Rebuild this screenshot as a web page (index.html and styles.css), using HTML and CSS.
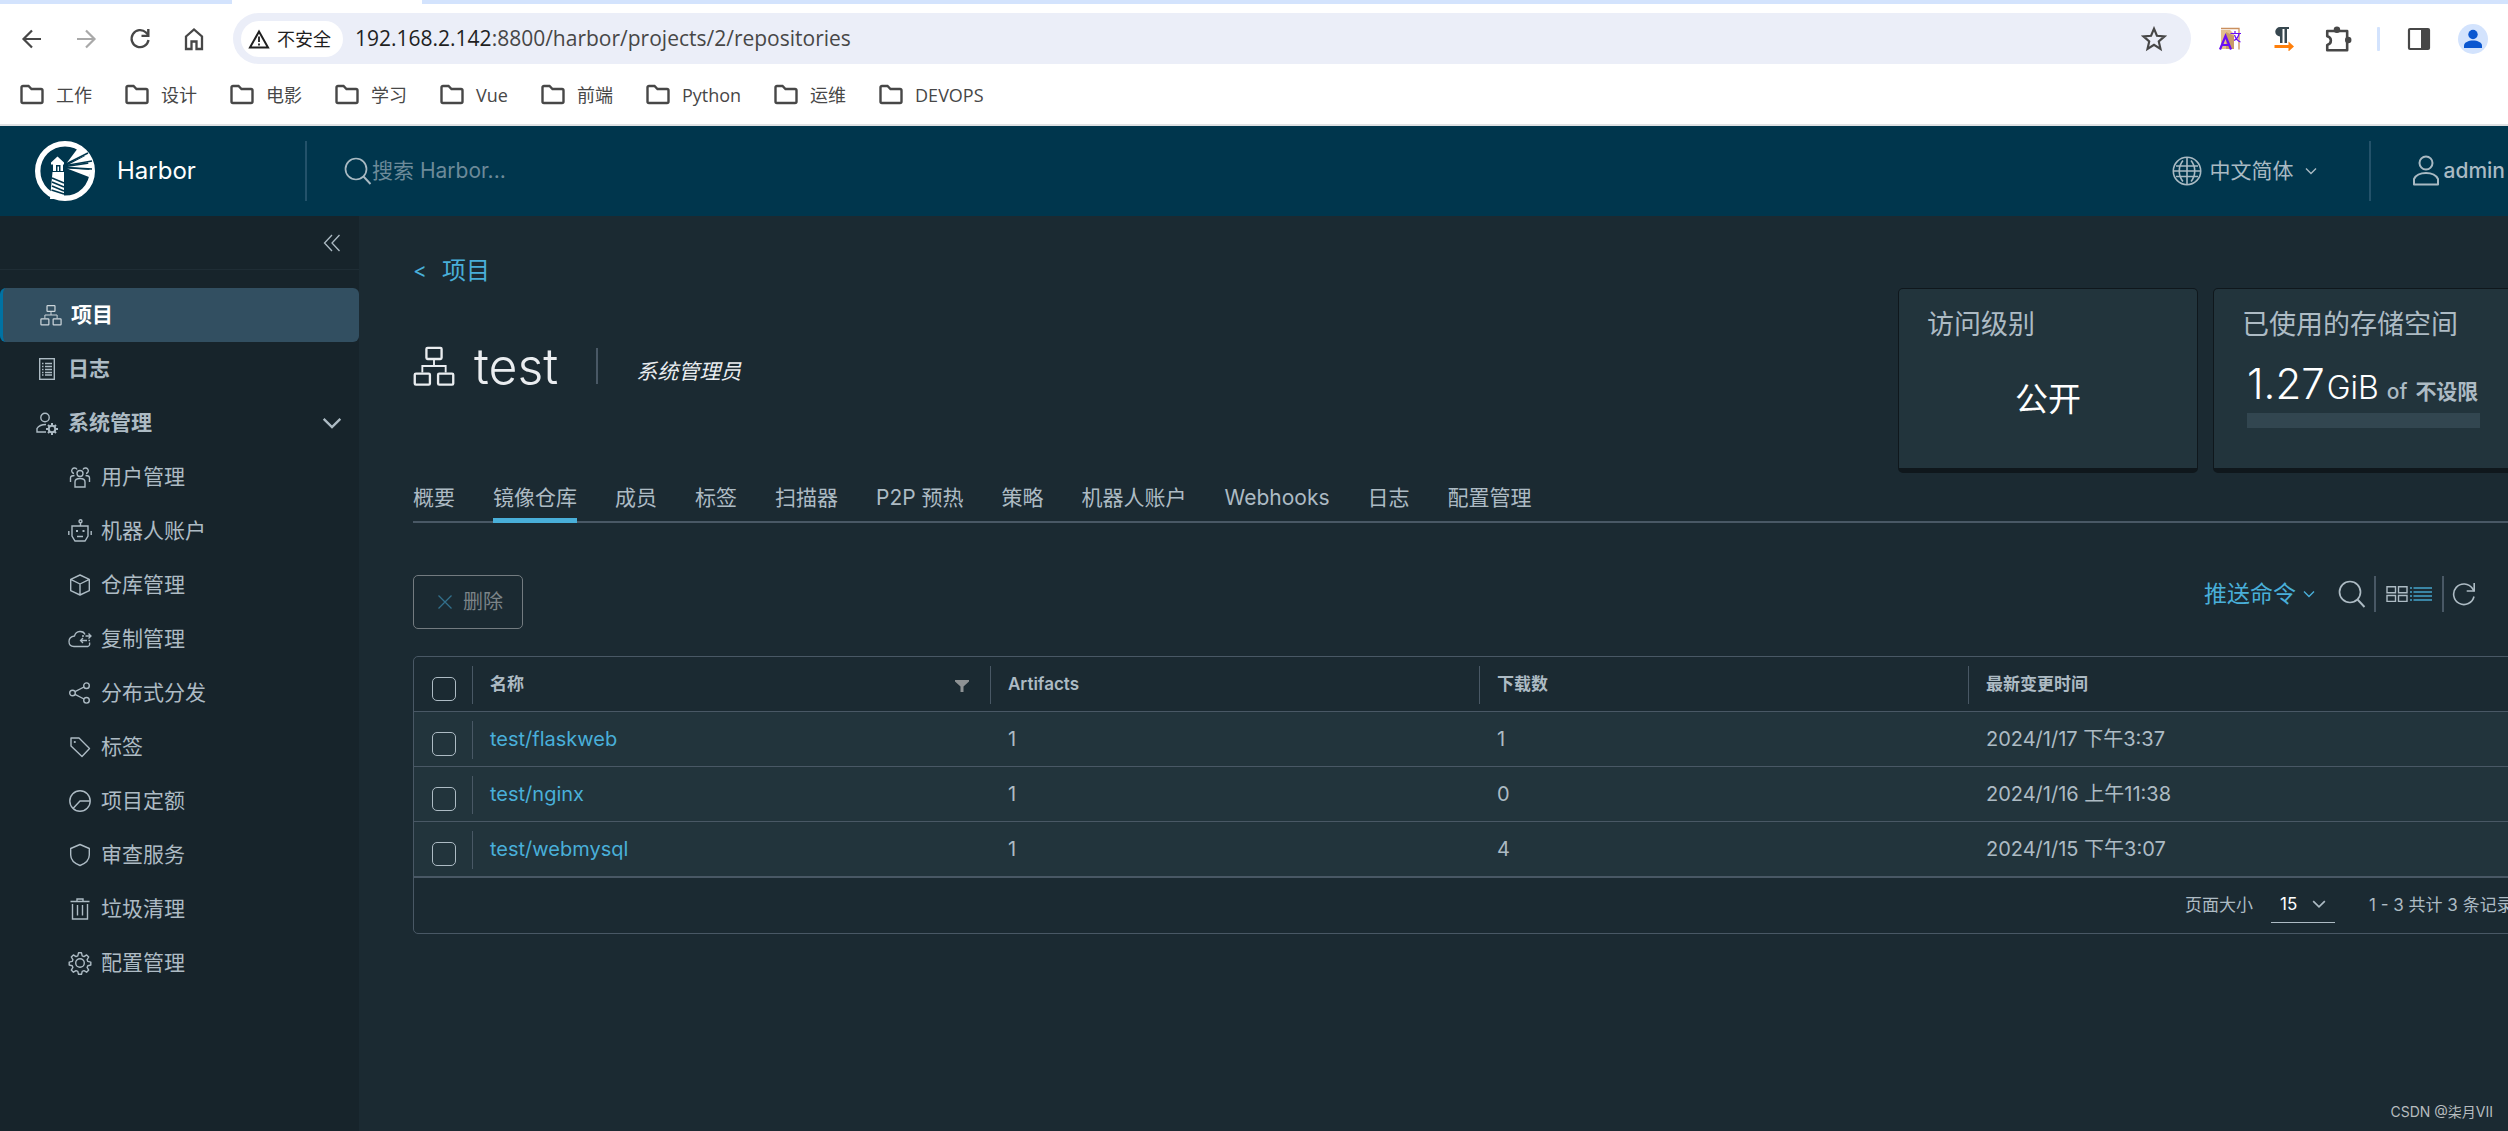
FILE: index.html
```html
<!DOCTYPE html>
<html lang="zh-CN">
<head>
<meta charset="utf-8">
<title>Harbor</title>
<meta name="viewport" content="width=device-width, initial-scale=1">
<link rel="stylesheet" href="styles.css">
</head>
<body>
<svg class="sprite" aria-hidden="true">
  <symbol id="i-folder" viewBox="0 0 24 24"><path d="M1.500 4.500a1.500 1.500 0 0 1 1.500-1.500h5.500l3 3h9.500a1.500 1.500 0 0 1 1.500 1.500v11a1.500 1.500 0 0 1-1.500 1.500h-18a1.500 1.500 0 0 1-1.500-1.500z" fill="none" stroke="currentColor" stroke-width="2.400"/></symbol>
  <symbol id="i-chev" viewBox="0 0 12 12"><path d="M1 3.500l5 5 5-5" fill="none" stroke="currentColor" stroke-width="1.400"/></symbol>
  <symbol id="i-search" viewBox="0 0 28 28"><circle cx="12" cy="12" r="10.500" fill="none" stroke="currentColor" stroke-width="1.700"/><path d="M19.500 19.500l7 7.500" stroke="currentColor" stroke-width="1.900"/></symbol>
  <symbol id="i-org" viewBox="0 0 36 36"><g fill="none" stroke="currentColor"><rect x="11.500" y="2.500" width="13" height="9.500" rx="1" stroke-width="2"/><rect x="1.500" y="24.500" width="13" height="9.500" rx="1" stroke-width="2"/><rect x="21.500" y="24.500" width="13" height="9.500" rx="1" stroke-width="2"/><path d="M18 12.500v5.500M8 23.500V18h20v5.500" stroke-width="1.600"/></g></symbol>
</svg>

<header class="browser">
  <div class="tabstrip"><span class="tab"></span></div>
  <div class="toolbar">
    <button class="tool" aria-label="后退"><svg viewBox="0 0 24 24"><path d="M21 12H4M12 3.500L3.500 12l8.500 8.500" fill="none" stroke="currentColor" stroke-width="2.200"/></svg></button>
    <button class="tool dim" aria-label="前进"><svg viewBox="0 0 24 24"><path d="M3 12h17M12 3.500l8.500 8.500-8.500 8.500" fill="none" stroke="currentColor" stroke-width="2.200"/></svg></button>
    <button class="tool" aria-label="重新加载"><svg viewBox="0 0 24 24"><path d="M20.500 13A8.500 8.500 0 1 1 18 5.500l2 2.200" fill="none" stroke="currentColor" stroke-width="2.300"/><path d="M21.500 2v8h-8v-2.200h5.600V2z" fill="currentColor"/></svg></button>
    <button class="tool" aria-label="主页"><svg viewBox="0 0 24 24"><path d="M4 9.500l8-7 8 7V22h-5.500v-7.500h-5V22H4z" fill="none" stroke="currentColor" stroke-width="2.300"/></svg></button>
    <div class="urlbar">
      <span class="chip"><svg viewBox="0 0 22 20"><path d="M11 2.500L20 18.500H2z" fill="none" stroke="currentColor" stroke-width="2"/><path d="M11 7.500v5.500M11 14.500v2" stroke="currentColor" stroke-width="1.800"/></svg>不安全</span>
      <span class="url">192.168.2.142<span class="path">:8800/harbor/projects/2/repositories</span></span>
      <svg class="star" viewBox="0 0 24 24"><path d="M12 2.500l2.700 6.500 7 .600-5.300 4.600 1.600 6.900-6-3.700-6 3.700 1.600-6.900L2.300 9.600l7-.600z" fill="none" stroke="currentColor" stroke-width="2"/></svg>
    </div>
    <div class="exts">
      <button class="tool" aria-label="翻译"><svg viewBox="0 0 24 24"><path d="M3 1.500h18v21" fill="none" stroke="#c98f5e" stroke-width="1.300"/><path d="M3 3h9l4 4v15H3z" fill="#e3bf8e"/><path d="M8 5l8 4v13H8z" fill="#c99a66"/><path d="M2 22.500L7.500 9 13 22.500M4 18h7" fill="none" stroke="#6a0df5" stroke-width="2.200"/><path d="M12.500 6.500H23M17 4v2.500M21 7c-1 4-3 5.500-5 6.500M16.500 8c1 3 3 6 6 7" fill="none" stroke="#6a0df5" stroke-width="1.200"/></svg></button>
      <button class="tool" aria-label="段落"><svg viewBox="0 0 24 24"><path d="M17 0v2h-2v14h-2.500V2h-2v14H8V9.500a4.700 4.700 0 0 1 0-9.500z" fill="#37474f"/><path d="M2.500 18h14v-3.500l5.500 5-5.500 5V21h-14z" fill="#ff7f0a"/></svg></button>
      <button class="tool puzzle" aria-label="扩展程序"><svg viewBox="0 0 26 26"><path d="M3 5.500h18.500v18H3V18.500c4.500-1 4.500-7 0-8z" fill="none" stroke="currentColor" stroke-width="2.400" stroke-linejoin="round"/><circle cx="12" cy="4.500" r="3" fill="currentColor"/><circle cx="22.500" cy="14" r="3" fill="currentColor"/></svg></button>
      <span class="ext-line"></span>
      <button class="tool" aria-label="侧边栏"><svg viewBox="0 0 24 24"><rect x="2" y="2" width="20" height="20" rx="1" fill="none" stroke="currentColor" stroke-width="2.200"/><path d="M14 2h8v20h-8z" fill="currentColor"/></svg></button>
      <button class="tool" aria-label="个人资料"><svg class="avatar" viewBox="0 0 30 30"><circle cx="15" cy="15" r="15" fill="#d3e3fd"/><circle cx="15" cy="10.500" r="4.700" fill="#0b57d0"/><path d="M6 24v-2.500c0-3 4.500-5 9-5s9 2 9 5V24z" fill="#0b57d0"/></svg></button>
    </div>
  </div>
  <nav class="bookmarks" aria-label="书签">
    <a href="#"><svg><use href="#i-folder"/></svg>工作</a>
    <a href="#"><svg><use href="#i-folder"/></svg>设计</a>
    <a href="#"><svg><use href="#i-folder"/></svg>电影</a>
    <a href="#"><svg><use href="#i-folder"/></svg>学习</a>
    <a href="#"><svg><use href="#i-folder"/></svg>Vue</a>
    <a href="#"><svg><use href="#i-folder"/></svg>前端</a>
    <a href="#"><svg><use href="#i-folder"/></svg>Python</a>
    <a href="#"><svg><use href="#i-folder"/></svg>运维</a>
    <a href="#"><svg><use href="#i-folder"/></svg>DEVOPS</a>
  </nav>
</header>

<div class="app">
  <header class="topbar">
    <a class="brand" href="#">
      <svg viewBox="0 0 60 60"><circle cx="30" cy="30" r="27.300" fill="none" stroke="#fff" stroke-width="5.400"/><g fill="#fff"><path d="M31 23L43 7l8 7zM32 24.500L52 14l3 7zM32.500 26L56 22.500V28zM32 27.500L56 29l-2 7z"/><path d="M22.500 15.500L29 21.500v2h-1V30H18v-6.500h-2v-2z"/><path d="M17.500 31h11.500v27H15z"/></g><path d="M31 23L53 12M31 24.500L57 20M31 26.500L57 28" stroke="#00364d" stroke-width="1.400"/><path d="M21 30v-6h4.500v6z" fill="#00364d"/><path d="M22.500 30v-4.500h1.500V30z" fill="#fff"/><g stroke="#00364d" stroke-width="1.600"><path d="M17 37l12 5M17 41l12 5M17 45l12 5M16.500 49l12.500 4"/></g></svg>
      <span>Harbor</span>
    </a>
    <span class="bar-line"></span>
    <label class="search"><svg><use href="#i-search"/></svg><input type="text" placeholder="搜索 Harbor..." aria-label="搜索 Harbor"></label>
    <button class="lang"><svg viewBox="0 0 30 30"><g fill="none" stroke="currentColor" stroke-width="1.600"><circle cx="15" cy="15" r="13.700"/><path d="M15 2v26M4 10h22M2 15h26M4 20.500h22M11 4.500c-5 6-5 15 0 21M19 4.500c5 6 5 15 0 21"/></g></svg>中文简体<svg class="chev"><use href="#i-chev"/></svg></button>
    <span class="bar-line"></span>
    <button class="user"><svg viewBox="0 0 28 32"><g fill="none" stroke="currentColor" stroke-width="2"><circle cx="14" cy="8" r="6.500"/><path d="M2 29.500V24c2-4 7-6 12-6s10 2 12 6v5.500z" stroke-linejoin="round"/></g></svg>admin</button>
  </header>

  <div class="body">
    <aside class="sidebar">
      <div class="collapse"><button aria-label="收起"><svg viewBox="0 0 18 18"><path d="M9 1L1.500 9 9 17M16.500 1L9 9l7.500 8" fill="none" stroke="currentColor" stroke-width="1.300"/></svg></button></div>
      <nav class="menu">
        <a class="item active" href="#"><svg><use href="#i-org"/></svg>项目</a>
        <a class="item log" href="#"><svg viewBox="0 0 24 24"><g fill="none" stroke="currentColor" stroke-width="1.400"><rect x="4.700" y="1.700" width="14.600" height="20.600"/><path d="M7 6.500h1.500M10 6.500h7M7 9.500h1.500M10 9.500h7M7 12.500h1.500M10 12.500h7M7 15.500h1.500M10 15.500h7M7 18h1.500M10 18h7"/></g></svg>日志</a>
        <button class="item admin"><svg viewBox="0 0 24 24"><g fill="none" stroke="currentColor" stroke-width="1.400"><circle cx="10" cy="6.500" r="4.200"/><path d="M11 13.500c-4 0-7.500 1.500-9 4V21h9"/><circle cx="17" cy="18" r="3.300" stroke-width="2"/><path d="M17 12v2.500M17 21.500V24M11 18h2.500M20.500 18H23M13 14l1.500 1.500M19.500 20.500L21 22M13 22l1.500-1.500M19.500 15.500L21 14" stroke-width="2"/></g></svg>系统管理<svg class="chev"><use href="#i-chev"/></svg></button>
        <a class="sub" href="#"><svg viewBox="0 0 24 24"><g fill="none" stroke="currentColor" stroke-width="1.400"><circle cx="12" cy="8.500" r="3"/><path d="M7 22v-5c0-2 2-3.500 5-3.500s5 1.500 5 3.500v5z"/><path d="M9 4.500A2.800 2.800 0 1 0 6 8.500M15 4.500A2.800 2.800 0 1 1 18 8.500M2.500 17v-4c0-1.500 1.500-2.500 4-2.500M21.500 17v-4c0-1.500-1.500-2.500-4-2.500"/></g></svg>用户管理</a>
        <a class="sub" href="#"><svg viewBox="0 0 24 24"><g fill="none" stroke="currentColor" stroke-width="1.400"><circle cx="12.500" cy="2.200" r="1.500"/><path d="M12.500 4v2.500M4 7h16v10l-3 5H7l-3-5zM.800 12v4M23.200 12v4M9 17.500h6"/><path d="M8 12h2M14.500 12h2" stroke-width="2"/></g></svg>机器人账户</a>
        <a class="sub" href="#"><svg viewBox="0 0 24 24"><path d="M12 2l9.300 4.300v11.400L12 22l-9.300-4.300V6.300zM2.700 6.300L12 11l9.300-4.700M12 11v11" fill="none" stroke="currentColor" stroke-width="1.400" stroke-linejoin="round"/></svg>仓库管理</a>
        <a class="sub" href="#"><svg viewBox="0 0 24 24"><path d="M17 7.500C15.500 3.500 8 3 6.500 9 3 9.500 1 11.500 1 14.500c0 3 2 5 5 5h14c1.500-.500 2-2 1.500-4M14 9h2M17.500 9h5M20.500 6.500L23 9l-2.500 2.500M22 13.500h-1.500M19 13.500h-6M15 11l-2.500 2.500L15 16" fill="none" stroke="currentColor" stroke-width="1.300"/></svg>复制管理</a>
        <a class="sub" href="#"><svg viewBox="0 0 24 24"><g fill="none" stroke="currentColor" stroke-width="1.400"><circle cx="4.500" cy="12" r="2.800"/><circle cx="18.500" cy="4.700" r="2.800"/><circle cx="18.500" cy="19.300" r="2.800"/><path d="M7 10.700l9-4.700M7 13.300l9 4.700"/></g></svg>分布式分发</a>
        <a class="sub" href="#"><svg viewBox="0 0 24 24"><path d="M3 3h8l10.500 10.500-7.500 8L3 11z" fill="none" stroke="currentColor" stroke-width="1.400" stroke-linejoin="round"/><circle cx="6.800" cy="7" r="1.100" fill="currentColor"/></svg>标签</a>
        <a class="sub" href="#"><svg viewBox="0 0 24 24"><g fill="none" stroke="currentColor" stroke-width="1.400"><circle cx="12" cy="12" r="10.200"/><path d="M22 12H12l-7 7.500"/></g></svg>项目定额</a>
        <a class="sub" href="#"><svg viewBox="0 0 24 24"><path d="M12 1.500l9.300 4V12c0 4.500-4 8.500-9.300 10.500C6.700 20.500 2.700 16.500 2.700 12V5.500z" fill="none" stroke="currentColor" stroke-width="1.400" stroke-linejoin="round"/></svg>审查服务</a>
        <a class="sub" href="#"><svg viewBox="0 0 24 24"><path d="M2.500 4.500h19M9 4.500v-2.500h6v2.500M4.500 7v15h15V7M9.500 8v10.500M14.500 8v10.500" fill="none" stroke="currentColor" stroke-width="1.400"/></svg>垃圾清理</a>
        <a class="sub" href="#"><svg viewBox="0 0 24 24"><g fill="none" stroke="currentColor" stroke-width="1.400" stroke-linejoin="round"><circle cx="12" cy="12" r="4.300"/><path d="M10.500 1.800h3l.700 3 1.800.800 2.600-1.700 2.100 2.100-1.600 2.700.700 1.700 3 .700v2.900l-3 .700-.700 1.700 1.600 2.700-2.100 2.100-2.600-1.600-1.800.800-.700 2.900h-3l-.700-2.900-1.800-.800-2.600 1.600-2.100-2.100 1.600-2.700-.700-1.700-3-.700v-2.900l3-.700.700-1.700-1.600-2.700 2.100-2.100L8 5.600l1.800-.800z"/></g></svg>配置管理</a>
      </nav>
    </aside>

    <main class="main">
      <div class="content">
        <a class="back" href="#"><span class="lt">&lt;</span>项目</a>
        <div class="hero">
          <div class="title">
            <svg><use href="#i-org"/></svg>
            <h1>test</h1>
            <span class="title-line"></span>
            <em>系统管理员</em>
          </div>
          <section class="card">
            <h2>访问级别</h2>
            <p class="access">公开</p>
          </section>
          <section class="card">
            <h2>已使用的存储空间</h2>
            <div class="quota">
              <p><span class="num">1.27</span><span class="unit">GiB</span><span class="of">of</span><b>不设限</b></p>
              <div class="meter"></div>
            </div>
          </section>
        </div>

        <nav class="tabs">
          <a href="#">概要</a>
          <a href="#" class="on">镜像仓库</a>
          <a href="#">成员</a>
          <a href="#">标签</a>
          <a href="#">扫描器</a>
          <a href="#">P2P 预热</a>
          <a href="#">策略</a>
          <a href="#">机器人账户</a>
          <a href="#">Webhooks</a>
          <a href="#">日志</a>
          <a href="#">配置管理</a>
        </nav>

        <div class="actions">
          <button class="delete" disabled><svg viewBox="0 0 16 16"><path d="M1.500 1.500l13 13M14.500 1.500l-13 13" stroke="currentColor" stroke-width="1.300"/></svg>删除</button>
          <div class="tools">
            <button class="push">推送命令<svg><use href="#i-chev"/></svg></button>
            <button class="find" aria-label="搜索"><svg><use href="#i-search"/></svg></button>
            <span class="tool-line"></span>
            <button class="view" aria-label="卡片视图"><svg viewBox="0 0 22 16"><g fill="none" stroke="currentColor" stroke-width="1.400"><path d="M1 .700h8.500v6H1zM12.500.700H21v6h-8.500zM1 9.500h8.500v6H1zM12.500 9.500H21v6h-8.500z"/></g></svg></button>
            <button class="view sel" aria-label="列表视图"><svg viewBox="0 0 22 16"><path d="M0 2h2M3.500 2H22M0 6h2M3.500 6H22M0 10h2M3.500 10H22M0 14h2M3.500 14H22" stroke="currentColor" stroke-width="2"/></svg></button>
            <span class="tool-line last"></span>
            <button class="refresh" aria-label="刷新"><svg viewBox="0 0 24 24"><path d="M22 14.500A10.300 10.300 0 1 1 20.500 6.500l1.500 2.500" fill="none" stroke="currentColor" stroke-width="1.600"/><path d="M22.200 1v8h-7.500" fill="none" stroke="currentColor" stroke-width="1.600"/></svg></button>
          </div>
        </div>

        <div class="grid">
          <table>
            <colgroup><col class="c-check"><col class="c-name"><col class="c-mid"><col class="c-mid"><col></colgroup>
            <thead>
              <tr><th><input type="checkbox" aria-label="全选"></th><th class="sep">名称<svg class="filter" viewBox="0 0 14 12"><path d="M0 0h14v1.500L8.500 6.500V12h-3V6.500L0 1.500z" fill="currentColor"/></svg></th><th class="sep">Artifacts</th><th class="sep">下载数</th><th class="sep">最新变更时间</th></tr>
            </thead>
            <tbody>
              <tr><td><input type="checkbox" aria-label="test/flaskweb"></td><td class="sep"><a href="#">test/flaskweb</a></td><td>1</td><td>1</td><td>2024/1/17 下午3:37</td></tr>
              <tr><td><input type="checkbox" aria-label="test/nginx"></td><td class="sep"><a href="#">test/nginx</a></td><td>1</td><td>0</td><td>2024/1/16 上午11:38</td></tr>
              <tr><td><input type="checkbox" aria-label="test/webmysql"></td><td class="sep"><a href="#">test/webmysql</a></td><td>1</td><td>4</td><td>2024/1/15 下午3:07</td></tr>
            </tbody>
          </table>
          <footer class="pager">
            <label for="size">页面大小</label>
            <span class="select"><select id="size"><option>15</option><option>25</option><option>50</option></select><svg><use href="#i-chev"/></svg></span>
            <span class="count">1 - 3 共计 3 条记录</span>
          </footer>
        </div>
      </div>
    </main>
  </div>
</div>
<div class="watermark">CSDN @柒月VII</div>
</body>
</html>
```
FILE: styles.css
```css
* { box-sizing: border-box; }
body {
  margin: 0;
  min-height: 100vh;
  display: flex;
  flex-direction: column;
  position: relative;
  overflow-x: hidden;
  background: #1b2a32;
  color: #adbbc4;
  font-family: Inter, "Noto Sans CJK SC", sans-serif;
  font-size: 21px;
  line-height: 30px;
}
a { color: inherit; text-decoration: none; }
button, input, select { font: inherit; color: inherit; background: none; border: 0; padding: 0; margin: 0; }
h1, h2, p { margin: 0; font-weight: 400; }
svg { display: block; flex: none; }
.sprite { position: absolute; width: 0; height: 0; }

/* browser window */
.browser {
  background: #fff;
  color: #474747;
  border-bottom: 2px solid #dfe1e3;
  font-family: "Open Sans", "Noto Sans CJK SC", sans-serif;
}
.tabstrip { height: 4px; background: #d3e3fd; padding-left: 232px; }
.tab { display: block; width: 190px; height: 4px; background: #fff; }
.toolbar { height: 69px; display: flex; align-items: center; padding: 0 8px 0 5px; }
.tool { width: 54px; height: 51px; display: flex; align-items: center; justify-content: center; }
.tool svg { width: 24px; height: 24px; }
.tool .avatar { width: 30px; height: 30px; }
.puzzle svg { width: 28px; height: 28px; }
.dim { color: #a9a9a9; }
.urlbar {
  flex: 1;
  height: 51px;
  margin: 0 12px;
  padding: 0 24px 0 8px;
  display: flex;
  align-items: center;
  gap: 12px;
  border-radius: 26px;
  background: #ebeef8;
}
.chip {
  height: 36px;
  padding: 0 12px 0 7px;
  display: flex;
  align-items: center;
  gap: 7px;
  border-radius: 18px;
  background: #fff;
  color: #1f1f1f;
  font-size: 18px;
}
.chip svg { width: 22px; height: 20px; }
.url { flex: 1; padding-bottom: 2px; font-size: 21px; color: #1f1f1f; }
.path { color: #474747; }
.star { width: 26px; height: 26px; }
.exts { display: flex; align-items: center; }
.ext-line { width: 3px; height: 24px; margin: 0 12px; background: #d3e3fd; border-radius: 1px; }
.bookmarks {
  height: 51px;
  padding: 0 20px 8px;
  display: flex;
  align-items: center;
  gap: 33px;
  font-size: 18px;
}
.bookmarks a { display: flex; align-items: center; gap: 12px; }
.bookmarks svg { width: 24px; height: 24px; }

/* application header */
.app { flex: 1; display: flex; flex-direction: column; }
.topbar {
  height: 90px;
  padding: 0 3px 0 35px;
  display: flex;
  align-items: center;
  background: #00364d;
  color: #a9bac3;
}
.brand { width: 270px; display: flex; align-items: center; gap: 22px; color: #fff; font-size: 24px; }
.brand svg { width: 60px; height: 60px; }
.bar-line { width: 2px; height: 60px; background: #23526a; }
.search { flex: 1; margin-left: 37px; display: flex; align-items: center; }
.search svg { width: 28px; height: 28px; }
.search input { flex: 1; outline: 0; }
.search input::placeholder { color: #6c8a99; opacity: 1; }
.lang { display: flex; align-items: center; margin-right: 52px; }
.lang svg { width: 30px; height: 30px; margin-right: 8px; }
.lang .chev { width: 12px; height: 12px; margin: 0 0 0 11px; }
.user { display: flex; align-items: center; gap: 4px; margin-left: 41px; font-weight: 500; }
.user svg { width: 28px; height: 32px; }

/* sidebar */
.body { flex: 1; display: flex; }
.sidebar { width: 359px; flex: none; background: #17242b; }
.collapse {
  height: 54px;
  padding-right: 18px;
  display: flex;
  align-items: center;
  justify-content: flex-end;
  border-bottom: 1px solid #1f2d35;
}
.collapse svg { width: 18px; height: 18px; }
.menu { margin-top: 18px; }
.menu a, .menu button { width: 100%; height: 54px; display: flex; align-items: center; }
.item { font-weight: 700; padding-left: 35px; gap: 9px; }
.menu svg { width: 24px; height: 24px; }
.menu .item.active {
  padding-left: 37px;
  border-left: 3px solid #0072a3;
  border-radius: 6px;
  background: #324f61;
  color: #fff;
}
.item.active svg { width: 22px; height: 22px; color: #cdd6db; }
.menu .chev { width: 20px; height: 20px; margin: 0 17px 0 auto; }
.sub { padding-left: 68px; gap: 9px; }

/* project page */
.main { flex: 1; min-width: 0; overflow: hidden; padding: 38px 0 0 54px; }
.content { margin-right: -5px; }
.back { height: 34px; display: flex; align-items: center; gap: 15px; color: #49afd9; font-size: 24px; }
.lt { font-size: 21px; }
.hero { display: flex; gap: 15px; }
.title { flex: 1; height: 48px; margin-top: 54px; display: flex; align-items: center; color: #eaedf0; }
.title svg { width: 42px; height: 42px; }
.title h1 { margin-left: 19px; font-size: 50px; line-height: 48px; font-weight: 300; }
.title-line { width: 2px; height: 36px; margin: 0 38px; background: #495865; }
.title em { padding-top: 12px; }
.card {
  width: 300px;
  height: 185px;
  padding: 20px 28px;
  border: 1px solid #0f171c;
  border-bottom-width: 5px;
  border-radius: 5px;
  background: #22343c;
}
.card h2 { font-size: 27px; line-height: 32px; white-space: nowrap; }
.access { margin-top: 34px; font-size: 33px; line-height: 48px; text-align: center; color: #fff; }
.quota { margin: 22px 4px 0 5px; }
.quota p { display: flex; align-items: baseline; line-height: 42px; white-space: nowrap; }
.num { font-size: 42px; font-weight: 300; color: #fff; }
.unit { margin: 0 8px 0 2px; font-size: 32px; font-weight: 300; color: #fff; }
.of { margin-right: 8px; font-weight: 500; }
.meter { height: 15px; background: #324650; }

.tabs { height: 50px; display: flex; gap: 38px; border-bottom: 2px solid #495865; }
.tabs a { height: 50px; line-height: 50px; white-space: nowrap; }
.tabs .on { border-bottom: 5px solid #49afd9; }

.actions { margin-top: 52px; display: flex; justify-content: space-between; align-items: flex-start; }
.delete {
  height: 54px;
  padding: 0 19px 0 23px;
  display: flex;
  align-items: center;
  gap: 10px;
  border: 1px solid #737b80;
  border-radius: 5px;
  color: #7c8488;
  font-size: 20px;
}
.delete svg { width: 16px; height: 16px; color: #326f8b; }
.tools { height: 38px; margin-right: 37px; display: flex; align-items: center; }
.push { display: flex; align-items: center; gap: 7px; margin-right: 23px; color: #49afd9; font-size: 23px; }
.push svg { width: 12px; height: 12px; }
.find svg { width: 28px; height: 28px; }
.tool-line { width: 2px; height: 36px; margin: 0 10px 0 8px; background: #495865; }
.tool-line.last { margin-left: 10px; margin-right: 8px; }
.view svg { width: 22px; height: 16px; }
.sel { margin-left: 2px; color: #3a85a5; }
.refresh svg { width: 24px; height: 24px; }

/* repository grid */
.grid { margin-top: 27px; border: 1px solid #495865; border-radius: 5px; }
table { width: 100%; table-layout: fixed; border-collapse: separate; border-spacing: 0; }
.c-check { width: 58px; }
.c-name { width: 518px; }
.c-mid { width: 489px; }
th, td { height: 55px; padding: 12px 18px 0; text-align: left; vertical-align: top; border-bottom: 1px solid #495865; }
th { font-size: 17px; font-weight: 600; }
td { background-color: #22343c; font-size: 20px; }
tbody tr:last-child td { height: 56px; border-bottom-width: 2px; }
.sep { background-image: linear-gradient(#495865, #495865); background-repeat: no-repeat; background-size: 1px 38px; background-position: 0 9px; }
td a { color: #49afd9; }
input[type="checkbox"] {
  appearance: none;
  display: block;
  width: 24px;
  height: 24px;
  margin-top: 8px;
  border: 1px solid #adbbc4;
  border-radius: 5px;
}
.filter { float: right; width: 14px; height: 12px; margin: 11px 3px 0 0; color: #8e9294; }
.pager { height: 55px; padding-bottom: 2px; display: flex; align-items: center; justify-content: flex-end; font-size: 17px; white-space: nowrap; }
.select { width: 64px; height: 37px; margin: 0 34px 0 18px; padding: 0 9px; display: flex; align-items: center; border-bottom: 1px solid #adbbc4; }
.select select { flex: 1; appearance: none; color: #fff; }
.select svg { width: 14px; height: 14px; }
.count { width: 143px; }

.watermark { position: absolute; right: 15px; bottom: 4px; font-size: 14px; color: #b7bcbf; }
```
